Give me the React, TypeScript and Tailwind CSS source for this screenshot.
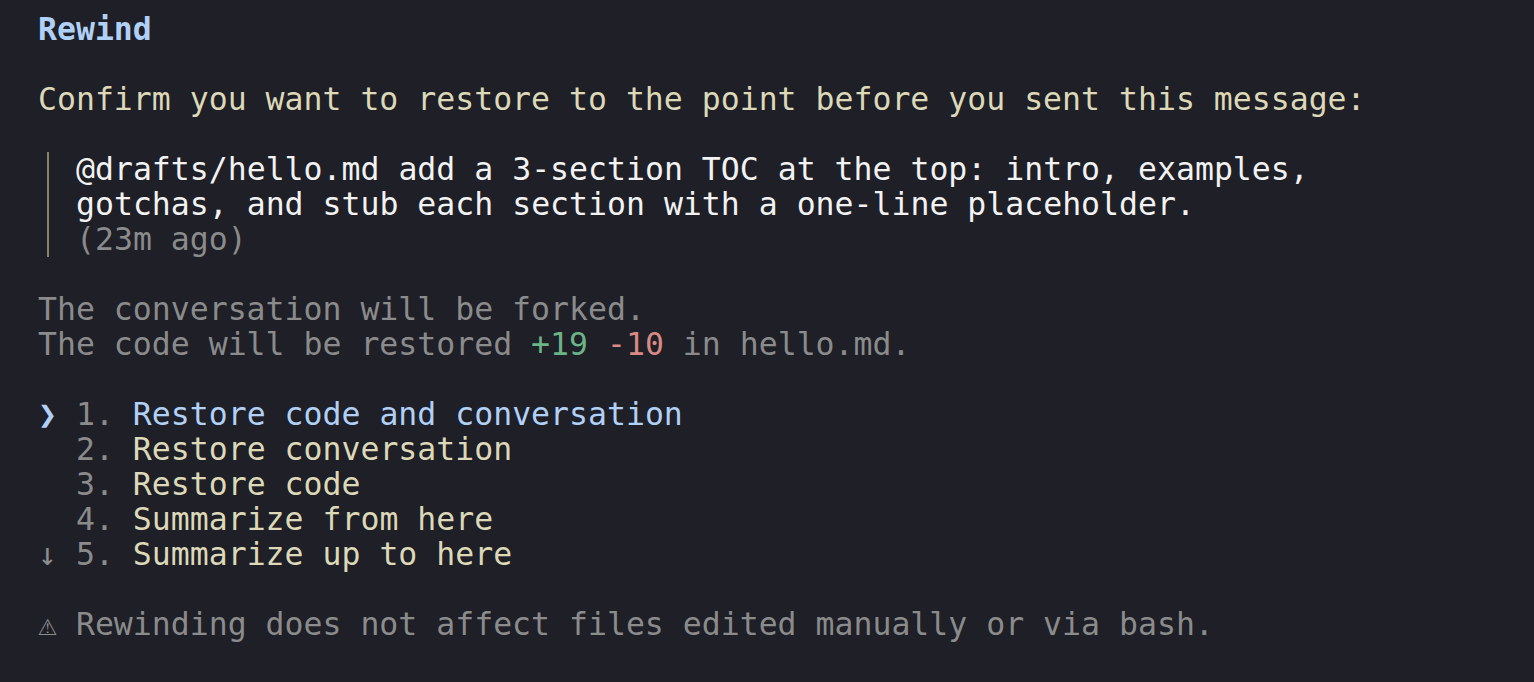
import React from "react";

const Line = ({ children, className = "" }: { children?: React.ReactNode; className?: string }) => (
  <div className={"h-[35px] leading-[35px] whitespace-pre " + className}>{children}</div>
);

export default function App() {
  const items = [
    "Restore conversation",
    "Restore code",
    "Summarize from here",
  ];
  return (
    <div
      className="w-[1534px] h-[682px] bg-[#1e1f27] pl-[38px] pt-[12px] text-[31.5px] text-[#dcd8b8] overflow-hidden"
      style={{ fontFamily: '"DejaVu Sans Mono", "Liberation Mono", monospace' }}
    >
      <Line className="font-bold text-[#b1d0f6]">Rewind</Line>
      <Line> </Line>
      <Line>Confirm you want to restore to the point before you sent this message:</Line>
      <Line> </Line>
      <div className="pl-[9px]">
        <div className="border-l-2 border-[#8a856f] pl-[27px]">
          <Line className="text-[#f2f2f2]">@drafts/hello.md add a 3-section TOC at the top: intro, examples,</Line>
          <Line className="text-[#f2f2f2]">gotchas, and stub each section with a one-line placeholder.</Line>
          <Line className="text-[#8b8b8b]">(23m ago)</Line>
        </div>
      </div>
      <Line> </Line>
      <Line className="text-[#8b8b8b]">The conversation will be forked.</Line>
      <Line className="text-[#8b8b8b]">
        The code will be restored <span className="text-[#6cb487]">+19</span>{" "}
        <span className="text-[#d98a85]">-10</span> in hello.md.
      </Line>
      <Line> </Line>
      <Line>
        <span className="text-[#b1d0f6]">❯</span> <span className="text-[#8b8b8b]">1.</span>{" "}
        <span className="text-[#b1d0f6]">Restore code and conversation</span>
      </Line>
      {items.map((t, i) => (
        <Line key={t}>
          {"  "}
          <span className="text-[#8b8b8b]">{i + 2}.</span> {t}
        </Line>
      ))}
      <Line>
        <span className="text-[#8b8b8b]">↓</span> <span className="text-[#8b8b8b]">5.</span> Summarize up to here
      </Line>
      <Line> </Line>
      <Line className="text-[#8b8b8b]">⚠ Rewinding does not affect files edited manually or via bash.</Line>
    </div>
  );
}
